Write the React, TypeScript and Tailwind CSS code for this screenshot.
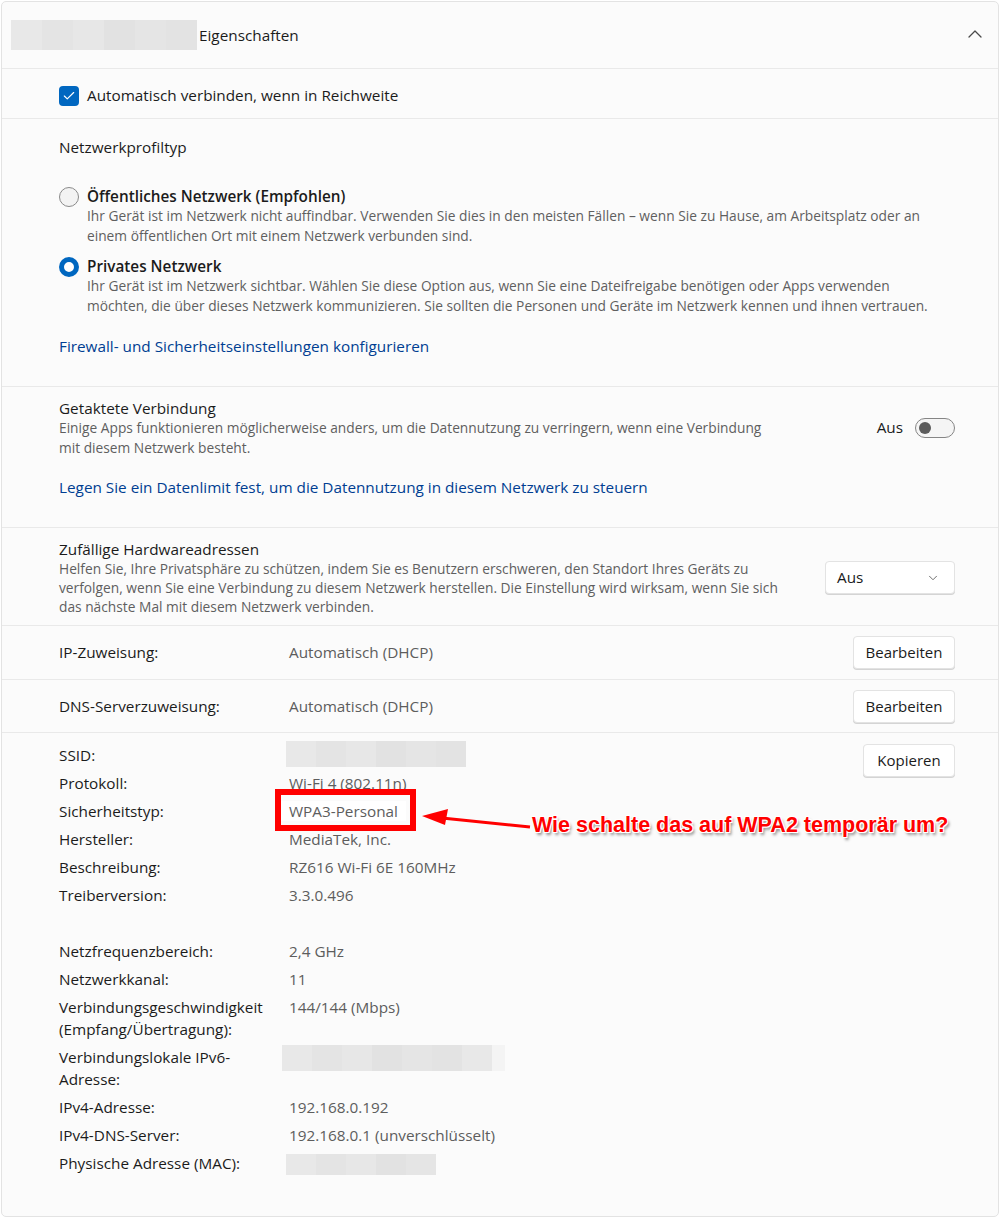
import { ChevronDown, ChevronUp, Check } from "lucide-react"

const font = { fontFamily: '"Open Sans", "Noto Sans", sans-serif' }

function Divider() {
  return <div className="h-px bg-[#e9e9e9]" />
}

function Radio({ checked }: { checked: boolean }) {
  if (checked) {
    return <div className="h-5 w-5 shrink-0 rounded-full border-[5px] border-[#0067c0] bg-white" />
  }
  return <div className="h-5 w-5 shrink-0 rounded-full border border-[#8a8a8a] bg-[#f3f3f3]" />
}

function PlainButton({ label, className = "" }: { label: string; className?: string }) {
  return (
    <div
      className={
        "flex h-[33px] shrink-0 items-center justify-center rounded-[4px] border border-[#e3e3e3] bg-white text-[15px] text-[#1b1b1b] shadow-[0_1px_0_#d4d4d4] " +
        className
      }
    >
      {label}
    </div>
  )
}

type Row = [string[], string | null, string?]

const props: Row[] = [
  [["Protokoll:"], "Wi-Fi 4 (802.11n)"],
  [["Sicherheitstyp:"], "WPA3-Personal", "mark"],
  [["Hersteller:"], "MediaTek, Inc."],
  [["Beschreibung:"], "RZ616 Wi-Fi 6E 160MHz"],
  [["Treiberversion:"], "3.3.0.496"],
]

const props2: Row[] = [
  [["Netzfrequenzbereich:"], "2,4 GHz"],
  [["Netzwerkkanal:"], "11"],
  [["Verbindungsgeschwindigkeit", "(Empfang/Übertragung):"], "144/144 (Mbps)"],
  [["Verbindungslokale IPv6-", "Adresse:"], null, "ipv6"],
  [["IPv4-Adresse:"], "192.168.0.192"],
  [["IPv4-DNS-Server:"], "192.168.0.1 (unverschlüsselt)"],
  [["Physische Adresse (MAC):"], null, "mac"],
]

function Blur({ w, h, extra }: { w: number; h: number; extra?: boolean }) {
  const cells = Math.round(w / 30)
  const shades = ["#e8e8e8", "#e4e4e4", "#e7e7e7", "#e2e2e2", "#e5e5e5", "#e3e3e3"]
  return (
    <div className="flex" style={{ height: h }}>
      {Array.from({ length: cells }).map((_, i) => (
        <div key={i} style={{ width: w / cells, background: shades[i % shades.length] }} />
      ))}
      {extra && <div className="w-[13px] bg-[#f4f4f4]" />}
    </div>
  )
}

function PropRow({ label, value, kind }: { label: string[]; value: string | null; kind?: string }) {
  return (
    <div className="flex leading-[22px]">
      <div className="w-[230px] shrink-0 text-[#1b1b1b]">
        {label.map((l) => (
          <div key={l}>{l}</div>
        ))}
      </div>
      <div className="text-[#5d5d5d]">
        {kind === "mark" ? (
          <span className="-ml-[8px] bg-white pl-[8px] pr-[8px]">{value}</span>
        ) : (
          value
        )}
        {kind === "ipv6" && (
          <div className="-ml-[7px] -mt-[1px]">
            <Blur w={210} h={26} extra />
          </div>
        )}
        {kind === "mac" && (
          <div className="-ml-[3px] mt-[2px]">
            <Blur w={150} h={21} />
          </div>
        )}
      </div>
    </div>
  )
}

export default function App() {
  return (
    <div className="min-h-[1218px] bg-white pl-px pt-px" style={font}>
      <div className="relative w-[998px] rounded-[5px] border border-[#e3e3e3] bg-[#fbfbfb] text-[15.3px] text-[#1b1b1b]">
        {/* header */}
        <div className="flex h-[66px] items-center pl-[9px] pr-[11px]">
          <Blur w={186} h={30} />
          <span className="ml-[2px]">Eigenschaften</span>
          <ChevronUp className="-mt-[3px] ml-auto h-6 w-6 text-[#4a4a4a]" strokeWidth={1.3} />
        </div>
        <Divider />

        <div className="flex h-[49px] items-center gap-2 pl-[57px] pt-[4px]">
          <div className="flex h-5 w-5 items-center justify-center rounded-[4px] bg-[#0067c0]">
            <Check className="h-3.5 w-3.5 text-white" strokeWidth={2} />
          </div>
          <span>Automatisch verbinden, wenn in Reichweite</span>
        </div>
        <Divider />

        <div className="pb-[30px] pl-[57px] pr-[43px] pt-[18px]">
          <div className="leading-5">Netzwerkprofiltyp</div>
          <div className="mt-[30px] flex gap-2">
            <Radio checked={false} />
            <div>
              <div className="font-semibold leading-[19px]">Öffentliches Netzwerk (Empfohlen)</div>
              <div className="whitespace-nowrap text-[13.75px] leading-5 text-[#5f5f5f]">
                <div>
                  Ihr Gerät ist im Netzwerk nicht auffindbar. Verwenden Sie dies in den meisten Fällen – wenn Sie zu
                  Hause, am Arbeitsplatz oder an
                </div>
                <div>einem öffentlichen Ort mit einem Netzwerk verbunden sind.</div>
              </div>
            </div>
          </div>
          <div className="mt-[11px] flex gap-2">
            <Radio checked />
            <div>
              <div className="font-semibold leading-[19px]">Privates Netzwerk</div>
              <div className="whitespace-nowrap text-[13.75px] leading-5 text-[#5f5f5f]">
                <div>
                  Ihr Gerät ist im Netzwerk sichtbar. Wählen Sie diese Option aus, wenn Sie eine Dateifreigabe benötigen
                  oder Apps verwenden
                </div>
                <div>
                  möchten, die über dieses Netzwerk kommunizieren. Sie sollten die Personen und Geräte im Netzwerk
                  kennen und ihnen vertrauen.
                </div>
              </div>
            </div>
          </div>
          <div className="mt-[20px] leading-5 text-[#003e92]">Firewall- und Sicherheitseinstellungen konfigurieren</div>
        </div>
        <Divider />

        <div className="pb-[30px] pl-[57px] pr-[43px] pt-[11px]">
          <div className="flex items-center">
            <div>
              <div className="leading-5">Getaktete Verbindung</div>
              <div className="whitespace-nowrap text-[13.75px] leading-[19.5px] text-[#5f5f5f]">
                <div>
                  Einige Apps funktionieren möglicherweise anders, um die Datennutzung zu verringern, wenn eine
                  Verbindung
                </div>
                <div>mit diesem Netzwerk besteht.</div>
              </div>
            </div>
            <div className="ml-auto flex items-center gap-[12px]">
              <span>Aus</span>
              <div className="flex h-5 w-10 items-center rounded-full border border-[#858585] bg-[#f5f5f5] px-[3px]">
                <div className="h-3 w-3 rounded-full bg-[#5c5c5c]" />
              </div>
            </div>
          </div>
          <div className="mt-[20px] leading-5 text-[#003e92]">
            Legen Sie ein Datenlimit fest, um die Datennutzung in diesem Netzwerk zu steuern
          </div>
        </div>
        <Divider />

        <div className="flex items-center pb-[9px] pl-[57px] pr-[43px] pt-[11px]">
          <div>
            <div className="leading-5">Zufällige Hardwareadressen</div>
            <div className="whitespace-nowrap text-[13.75px] leading-[19px] text-[#5f5f5f]">
              <div>
                Helfen Sie, Ihre Privatsphäre zu schützen, indem Sie es Benutzern erschweren, den Standort Ihres Geräts
                zu
              </div>
              <div>
                verfolgen, wenn Sie eine Verbindung zu diesem Netzwerk herstellen. Die Einstellung wird wirksam, wenn
                Sie sich
              </div>
              <div>das nächste Mal mit diesem Netzwerk verbinden.</div>
            </div>
          </div>
          <div className="ml-auto flex h-[33px] w-[130px] items-center justify-between rounded-[4px] border border-[#e3e3e3] bg-white pl-[11px] pr-[14px] shadow-[0_1px_0_#d4d4d4]">
            <span>Aus</span>
            <ChevronDown className="h-3.5 w-3.5 text-[#5c5c5c]" strokeWidth={1.5} />
          </div>
        </div>
        <Divider />

        <div className="flex h-[53px] items-center pl-[57px] pr-[43px]">
          <span className="w-[230px]">IP-Zuweisung:</span>
          <span className="text-[#5d5d5d]">Automatisch (DHCP)</span>
          <PlainButton label="Bearbeiten" className="ml-auto w-[102px]" />
        </div>
        <Divider />
        <div className="flex h-[52px] items-center pl-[57px] pr-[43px]">
          <span className="w-[230px]">DNS-Serverzuweisung:</span>
          <span className="text-[#5d5d5d]">Automatisch (DHCP)</span>
          <PlainButton label="Bearbeiten" className="ml-auto w-[102px]" />
        </div>
        <Divider />

        <div className="flex pb-[41px] pl-[57px] pr-[43px] pt-[11px]">
          <div className="flex flex-1 flex-col gap-[6px]">
            <div className="flex h-[22px] leading-[22px]">
              <span className="w-[227px] shrink-0">SSID:</span>
              <div className="-mt-[3px]">
                <Blur w={180} h={26} />
              </div>
            </div>
            {props.map(([l, v, k]) => (
              <PropRow key={l[0]} label={l} value={v} kind={k} />
            ))}
            <div className="h-[22px]" />
            {props2.map(([l, v, k]) => (
              <PropRow key={l[0]} label={l} value={v} kind={k} />
            ))}
          </div>
          <PlainButton label="Kopieren" className="w-[92px]" />
        </div>

        {/* annotation */}
        <div className="absolute left-[273px] top-[787px] h-[42px] w-[141px] border-[6px] border-[#ff0000]" />
        <svg className="absolute left-[416px] top-[804px]" width="116" height="28" viewBox="0 0 116 28">
          <line x1="112" y1="21" x2="24" y2="12" stroke="#ff0000" strokeWidth="3" />
          <polygon points="4,10 30,3 27,19" fill="#ff0000" />
        </svg>
        <div
          className="absolute left-[530px] top-[810px] whitespace-nowrap text-[21.5px] font-bold leading-[26px] text-[#ff0000]"
          style={{
            fontFamily: '"Liberation Sans", Arial, sans-serif',
            textShadow:
              "-1px -1px 0 #fff, 1px -1px 0 #fff, -1px 1px 0 #fff, 1px 1px 0 #fff, 2px 3px 3px rgba(0,0,0,0.45)",
          }}
        >
          Wie schalte das auf WPA2 temporär um?
        </div>
      </div>
    </div>
  )
}
